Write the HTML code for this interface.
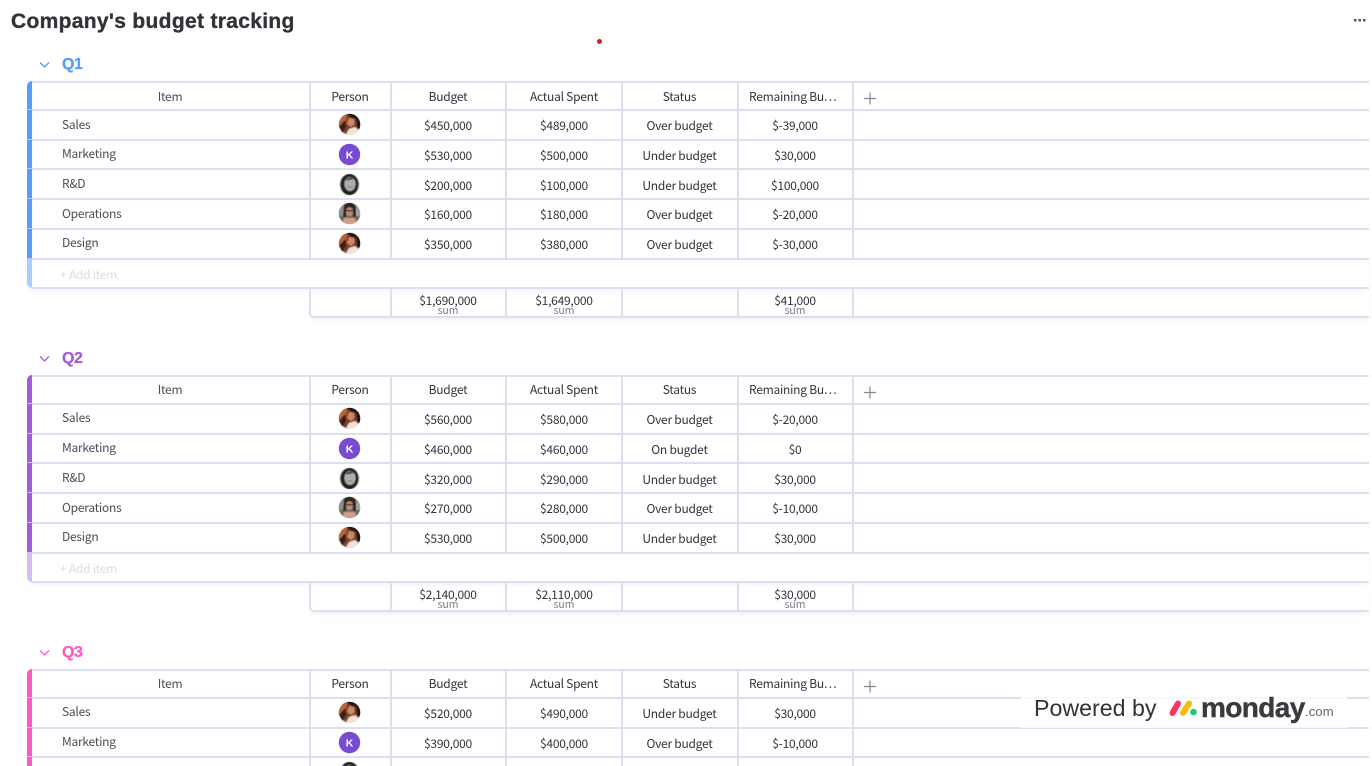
<!DOCTYPE html>
<html><head><meta charset="utf-8"><style>
html,body{margin:0;padding:0;background:#fff;width:1372px;height:766px;overflow:hidden}
body{position:relative;font-family:"Noto Sans CJK JP","Liberation Sans",sans-serif;font-size:12px;letter-spacing:-.25px;color:#323338}
.t{position:absolute;left:11px;top:8px;font:bold 21px/28px "Liberation Sans",sans-serif;color:#323338;white-space:nowrap;letter-spacing:.32px;-webkit-text-stroke:.35px #323338}
.g{position:absolute;left:0;width:1372px;height:237px}
.q{position:absolute;left:62px;top:-26px;font:bold 16px/20px "Liberation Sans",sans-serif;letter-spacing:-.5px;-webkit-text-stroke:.3px currentColor}
.ch{position:absolute;left:39px;top:-20px}
.h{position:absolute;left:32px;width:1337px;height:2px;background:#dcdfef}
.v{position:absolute;width:2px;background:#dcdfef}
.b{position:absolute;left:27px;width:5px}
.r{position:absolute;left:0;width:1372px;height:20px;line-height:20px}
.r span{position:absolute;top:0;text-align:center;white-space:nowrap}
.r .i{left:62px;top:-2px;color:#4b4c55;text-align:left}
.r .i0{left:32px;top:0;width:276px;color:#4b4c55}
.r .p{left:310px;width:80px}
.r .c{left:391px;width:114px}
.r .a{left:507px;width:114px}
.r .s{left:622px;width:115px}
.r .m{left:738px;width:114px}
.r .mh{left:749px;text-align:left}
.add{position:absolute;left:60px;top:184px;color:#dcdde2;line-height:20px}
.sh{position:absolute;left:27px;top:177px;width:1342px;height:30px;box-shadow:0 4px 6px -3px rgba(80,90,140,.13)}
.ft{position:absolute;left:309px;top:207px;width:1060px;height:30px;border-radius:0 0 0 5px;border-left:2px solid #dcdfef;border-bottom:2px solid #dcdfef;box-sizing:border-box;box-shadow:0 4px 6px -3px rgba(80,90,140,.13)}
.su{position:absolute;top:212px;line-height:16px;text-align:center}
.sm{position:absolute;top:224px;line-height:11px;font-size:10.5px;letter-spacing:0;color:#7a7c88;text-align:center}
.pl{position:absolute;left:864px;top:11px}
.av{position:absolute;left:338px;width:23px;height:23px}
</style></head><body>
<svg width="0" height="0" style="position:absolute"><defs>
<filter id="bl"><feGaussianBlur stdDeviation=".5"/></filter>
<clipPath id="cc"><circle cx="11.5" cy="11.5" r="10.8"/></clipPath>
<g id="a1"><g clip-path="url(#cc)"><g filter="url(#bl)"><rect width="23" height="23" fill="#eef2fa"/><circle cx="11.5" cy="11" r="10.8" fill="#7d4328"/><path d="M0 8L9 0L8 8L2 16L0 14Z" fill="#b9683a"/><path d="M8 0L23 0L23 18L19 14L18 6L12 4Z" fill="#231416"/><path d="M11 5L16 6L16.5 11L13 14L9 11Z" fill="#c98a6c"/><path d="M1 14L7 7L8 14L4 20Z" fill="#3a1c14"/><path d="M7 23L11 16L17 14L23 19L20 23Z" fill="#efe3d8"/></g></g></g>
<g id="a3"><g clip-path="url(#cc)"><g filter="url(#bl)"><rect width="23" height="23" fill="#f0f0f0"/><ellipse cx="11.5" cy="11.5" rx="9.3" ry="11" fill="#232122"/><ellipse cx="12" cy="11" rx="5.6" ry="7" fill="#b0adac"/><path d="M7 6.5L13 4L16 6L10 7.5Z" fill="#4a4748"/><path d="M9.5 14H14.5" stroke="#777" stroke-width="1"/></g></g></g>
<g id="a4"><g clip-path="url(#cc)"><g filter="url(#bl)"><rect width="23" height="23" fill="#6f6a68"/><path d="M0 0H6V14H0Z" fill="#8f8f90"/><path d="M17 0H23V14H17Z" fill="#a3a3a5"/><path d="M6 3L12 0L18 4L18 15L15 15L15 7L8 7L8 15L5 15Z" fill="#33201c"/><ellipse cx="11.5" cy="9.5" rx="3.6" ry="4.4" fill="#bb8d76"/><rect x="7.5" y="8" width="8" height="1.4" fill="#33231f"/><path d="M4 23L6 16L17 16L19 23Z" fill="#cf9f86"/></g></g></g>
<g id="ak"><circle cx="11.5" cy="11.5" r="10.7" fill="#784bd1"/><text x="11.5" y="15.4" text-anchor="middle" font-family="Liberation Sans" font-weight="bold" font-size="10.5" letter-spacing="0" fill="#fff">K</text></g>
<path id="chev" d="M1 1.5L5.5 6L10 1.5" fill="none" stroke-width="1.3"/>
<path id="plus" d="M6 .5V12.5M0 6.5H12" fill="none" stroke="#85868f" stroke-width="1.2"/>
</defs></svg>

<div class="t">Company's budget tracking</div>
<div style="position:absolute;left:597px;top:39px;width:5px;height:5px;border-radius:50%;background:#d71a1a"></div>
<svg style="position:absolute;left:1353px;top:18px" width="14" height="4"><rect x="1" y="1" width="2.5" height="2.5" fill="#555"/><rect x="5.5" y="1" width="2.5" height="2.5" fill="#555"/><rect x="10" y="1" width="2.5" height="2.5" fill="#555"/></svg>

<!-- Q1 -->
<div class="g" style="top:81px">
<svg class="ch" width="11" height="8" stroke="#579bfc"><use href="#chev"/></svg><div class="q" style="color:#579bfc">Q1</div>
<div class="h" style="top:0"></div><div class="h" style="top:28px"></div><div class="h" style="top:58px"></div><div class="h" style="top:87px"></div><div class="h" style="top:117px"></div><div class="h" style="top:147px"></div><div class="h" style="top:177px"></div><div class="sh"></div><div class="h" style="top:206px"></div>
<div class="b" style="top:0;height:178px;background:#a9cbfd;border-radius:5px 0 0 0"></div>
<div class="b" style="top:0;height:28px;background:#579bfc;border-radius:5px 0 0 0"></div><div class="b" style="top:29px;height:29px;background:#579bfc"></div><div class="b" style="top:59px;height:28px;background:#579bfc"></div><div class="b" style="top:88px;height:29px;background:#579bfc"></div><div class="b" style="top:118px;height:29px;background:#579bfc"></div><div class="b" style="top:148px;height:29px;background:#579bfc"></div><div class="b" style="top:178px;height:29px;background:#abcdfd;border-radius:0 0 0 5px"></div>
<div class="v" style="left:309px;top:0;height:178px"></div><div class="v" style="left:390px;top:0;height:178px"></div><div class="v" style="left:505px;top:0;height:178px"></div><div class="v" style="left:621px;top:0;height:178px"></div><div class="v" style="left:737px;top:0;height:178px"></div><div class="v" style="left:852px;top:0;height:178px"></div>
<div class="ft"></div><div class="v" style="left:390px;top:207px;height:30px"></div><div class="v" style="left:505px;top:207px;height:30px"></div><div class="v" style="left:621px;top:207px;height:30px"></div><div class="v" style="left:737px;top:207px;height:30px"></div><div class="v" style="left:852px;top:207px;height:30px"></div>
<svg class="pl" width="12" height="13"><use href="#plus"/></svg>
<div class="r" style="top:6px"><span class="i0">Item</span><span class="p">Person</span><span class="c">Budget</span><span class="a">Actual Spent</span><span class="s">Status</span><span class="mh">Remaining Bu⋯</span></div>
<div class="r" style="top:35px"><span class="i" style="top:-1px">Sales</span><span class="c">$450,000</span><span class="a">$489,000</span><span class="s">Over budget</span><span class="m">$-39,000</span></div>
<div class="r" style="top:65px"><span class="i" style="top:-2px">Marketing</span><span class="c">$530,000</span><span class="a">$500,000</span><span class="s">Under budget</span><span class="m">$30,000</span></div>
<div class="r" style="top:95px"><span class="i" style="top:-2px">R&amp;D</span><span class="c">$200,000</span><span class="a">$100,000</span><span class="s">Under budget</span><span class="m">$100,000</span></div>
<div class="r" style="top:124px"><span class="i" style="top:-1px">Operations</span><span class="c">$160,000</span><span class="a">$180,000</span><span class="s">Over budget</span><span class="m">$-20,000</span></div>
<div class="r" style="top:154px"><span class="i" style="top:-2px">Design</span><span class="c">$350,000</span><span class="a">$380,000</span><span class="s">Over budget</span><span class="m">$-30,000</span></div>
<svg class="av" style="top:32px"><use href="#a1"/></svg><svg class="av" style="top:62px"><use href="#ak"/></svg><svg class="av" style="top:92px"><use href="#a3"/></svg><svg class="av" style="top:121px"><use href="#a4"/></svg><svg class="av" style="top:151px"><use href="#a1"/></svg>
<div class="add">+ Add item</div>
<div class="su" style="left:391px;width:114px">$1,690,000</div><div class="sm" style="left:391px;width:114px">sum</div>
<div class="su" style="left:507px;width:114px">$1,649,000</div><div class="sm" style="left:507px;width:114px">sum</div>
<div class="su" style="left:738px;width:114px">$41,000</div><div class="sm" style="left:738px;width:114px">sum</div>
</div>

<!-- Q2 -->
<div class="g" style="top:375px">
<svg class="ch" width="11" height="8" stroke="#a25ddc"><use href="#chev"/></svg><div class="q" style="color:#a25ddc">Q2</div>
<div class="h" style="top:0"></div><div class="h" style="top:28px"></div><div class="h" style="top:58px"></div><div class="h" style="top:87px"></div><div class="h" style="top:117px"></div><div class="h" style="top:147px"></div><div class="h" style="top:177px"></div><div class="sh"></div><div class="h" style="top:206px"></div>
<div class="b" style="top:0;height:178px;background:#d5bbf0;border-radius:5px 0 0 0"></div>
<div class="b" style="top:0;height:28px;background:#a25ddc;border-radius:5px 0 0 0"></div><div class="b" style="top:29px;height:29px;background:#a25ddc"></div><div class="b" style="top:59px;height:28px;background:#a25ddc"></div><div class="b" style="top:88px;height:29px;background:#a25ddc"></div><div class="b" style="top:118px;height:29px;background:#a25ddc"></div><div class="b" style="top:148px;height:29px;background:#a25ddc"></div><div class="b" style="top:178px;height:29px;background:#d5bbf0;border-radius:0 0 0 5px"></div>
<div class="v" style="left:309px;top:0;height:178px"></div><div class="v" style="left:390px;top:0;height:178px"></div><div class="v" style="left:505px;top:0;height:178px"></div><div class="v" style="left:621px;top:0;height:178px"></div><div class="v" style="left:737px;top:0;height:178px"></div><div class="v" style="left:852px;top:0;height:178px"></div>
<div class="ft"></div><div class="v" style="left:390px;top:207px;height:30px"></div><div class="v" style="left:505px;top:207px;height:30px"></div><div class="v" style="left:621px;top:207px;height:30px"></div><div class="v" style="left:737px;top:207px;height:30px"></div><div class="v" style="left:852px;top:207px;height:30px"></div>
<svg class="pl" width="12" height="13"><use href="#plus"/></svg>
<div class="r" style="top:5px"><span class="i0">Item</span><span class="p">Person</span><span class="c">Budget</span><span class="a">Actual Spent</span><span class="s">Status</span><span class="mh">Remaining Bu⋯</span></div>
<div class="r" style="top:35px"><span class="i" style="top:-2px">Sales</span><span class="c">$560,000</span><span class="a">$580,000</span><span class="s">Over budget</span><span class="m">$-20,000</span></div>
<div class="r" style="top:65px"><span class="i" style="top:-2px">Marketing</span><span class="c">$460,000</span><span class="a">$460,000</span><span class="s">On bugdet</span><span class="m">$0</span></div>
<div class="r" style="top:95px"><span class="i" style="top:-2px">R&amp;D</span><span class="c">$320,000</span><span class="a">$290,000</span><span class="s">Under budget</span><span class="m">$30,000</span></div>
<div class="r" style="top:124px"><span class="i" style="top:-1px">Operations</span><span class="c">$270,000</span><span class="a">$280,000</span><span class="s">Over budget</span><span class="m">$-10,000</span></div>
<div class="r" style="top:154px"><span class="i" style="top:-2px">Design</span><span class="c">$530,000</span><span class="a">$500,000</span><span class="s">Under budget</span><span class="m">$30,000</span></div>
<svg class="av" style="top:32px"><use href="#a1"/></svg><svg class="av" style="top:62px"><use href="#ak"/></svg><svg class="av" style="top:92px"><use href="#a3"/></svg><svg class="av" style="top:121px"><use href="#a4"/></svg><svg class="av" style="top:151px"><use href="#a1"/></svg>
<div class="add">+ Add item</div>
<div class="su" style="left:391px;width:114px">$2,140,000</div><div class="sm" style="left:391px;width:114px">sum</div>
<div class="su" style="left:507px;width:114px">$2,110,000</div><div class="sm" style="left:507px;width:114px">sum</div>
<div class="su" style="left:738px;width:114px">$30,000</div><div class="sm" style="left:738px;width:114px">sum</div>
</div>

<!-- Q3 -->
<div class="g" style="top:669px;height:97px">
<svg class="ch" width="11" height="8" stroke="#ff5ac4"><use href="#chev"/></svg><div class="q" style="color:#ff5ac4">Q3</div>
<div class="h" style="top:0"></div><div class="h" style="top:28px"></div><div class="h" style="top:58px"></div><div class="h" style="top:87px"></div>
<div class="b" style="top:0;height:97px;background:#ffb5e4;border-radius:5px 0 0 0"></div>
<div class="b" style="top:0;height:28px;background:#ff5ac4;border-radius:5px 0 0 0"></div><div class="b" style="top:29px;height:29px;background:#ff5ac4"></div><div class="b" style="top:59px;height:28px;background:#ff5ac4"></div><div class="b" style="top:88px;height:9px;background:#ff5ac4"></div>
<div class="v" style="left:309px;top:0;height:97px"></div><div class="v" style="left:390px;top:0;height:97px"></div><div class="v" style="left:505px;top:0;height:97px"></div><div class="v" style="left:621px;top:0;height:97px"></div><div class="v" style="left:737px;top:0;height:97px"></div><div class="v" style="left:852px;top:0;height:97px"></div>
<svg class="pl" width="12" height="13"><use href="#plus"/></svg>
<div class="r" style="top:5px"><span class="i0">Item</span><span class="p">Person</span><span class="c">Budget</span><span class="a">Actual Spent</span><span class="s">Status</span><span class="mh">Remaining Bu⋯</span></div>
<div class="r" style="top:35px"><span class="i" style="top:-2px">Sales</span><span class="c">$520,000</span><span class="a">$490,000</span><span class="s">Under budget</span><span class="m">$30,000</span></div>
<div class="r" style="top:65px"><span class="i" style="top:-2px">Marketing</span><span class="c">$390,000</span><span class="a">$400,000</span><span class="s">Over budget</span><span class="m">$-10,000</span></div>
<svg class="av" style="top:32px"><use href="#a1"/></svg><svg class="av" style="top:62px"><use href="#ak"/></svg>
<div style="position:absolute;left:338px;top:92px;width:23px;height:5px;overflow:hidden"><svg width="23" height="23" style="display:block"><use href="#a3"/></svg></div>
</div>

<!-- Powered by -->
<div style="position:absolute;left:1021px;top:696px;width:326px;height:32px;background:rgba(255,255,255,.82)"></div>
<div style="position:absolute;left:1034px;top:694px;font:23.2px/28px 'Liberation Sans',sans-serif;letter-spacing:0;color:#333;white-space:nowrap">Powered by</div>
<svg style="position:absolute;left:1168px;top:698px" width="32" height="22"><g stroke-linecap="round" fill="none" stroke-width="6"><path d="M4.5 15L10 5.5" stroke="#f8365f"/><path d="M15 15L21 5.5" stroke="#fdb90a"/></g><circle cx="25.5" cy="14" r="3.3" fill="#19c87f"/></svg>
<div style="position:absolute;left:1201px;top:692px;font:bold 28px/32px 'Liberation Sans',sans-serif;color:#3a3a3f;white-space:nowrap;letter-spacing:-.6px;-webkit-text-stroke:.4px #3a3a3f">monday</div>
<div style="position:absolute;left:1305px;top:703px;font:13.2px/18px 'Liberation Sans',sans-serif;letter-spacing:0;color:#666;white-space:nowrap">.com</div>
</body></html>
